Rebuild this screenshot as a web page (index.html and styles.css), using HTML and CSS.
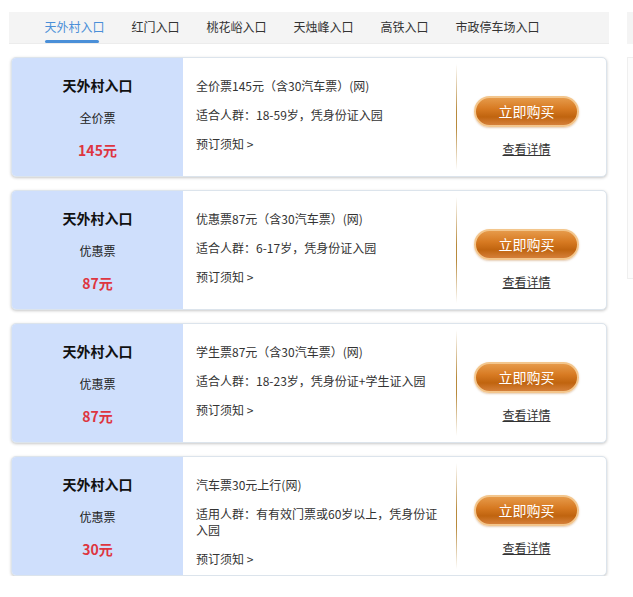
FILE: index.html
```html
<!DOCTYPE html>
<html lang="zh">
<head>
<meta charset="utf-8">
<title>门票</title>
<link rel="stylesheet" href="styles.css">
</head>
<body>
<div class="page">
  <div class="main">
    <div class="tabs">
      <div class="tab active">天外村入口</div>
      <div class="tab">红门入口</div>
      <div class="tab">桃花峪入口</div>
      <div class="tab">天烛峰入口</div>
      <div class="tab">高铁入口</div>
      <div class="tab">市政停车场入口</div>
    </div>

    <div class="card">
      <div class="side">
        <div class="gate">天外村入口</div>
        <div class="kind">全价票</div>
        <div class="price">145元</div>
      </div>
      <div class="info">
        <p>全价票145元（含30汽车票）(网)</p>
        <p>适合人群：18-59岁，凭身份证入园</p>
        <p>预订须知 &gt;</p>
      </div>
      <div class="divider"></div>
      <div class="act">
        <div class="buy">立即购买</div>
        <div class="detail">查看详情</div>
      </div>
    </div>

    <div class="card">
      <div class="side">
        <div class="gate">天外村入口</div>
        <div class="kind">优惠票</div>
        <div class="price">87元</div>
      </div>
      <div class="info">
        <p>优惠票87元（含30汽车票）(网)</p>
        <p>适合人群：6-17岁，凭身份证入园</p>
        <p>预订须知 &gt;</p>
      </div>
      <div class="divider"></div>
      <div class="act">
        <div class="buy">立即购买</div>
        <div class="detail">查看详情</div>
      </div>
    </div>

    <div class="card">
      <div class="side">
        <div class="gate">天外村入口</div>
        <div class="kind">优惠票</div>
        <div class="price">87元</div>
      </div>
      <div class="info">
        <p>学生票87元（含30汽车票）(网)</p>
        <p>适合人群：18-23岁，凭身份证+学生证入园</p>
        <p>预订须知 &gt;</p>
      </div>
      <div class="divider"></div>
      <div class="act">
        <div class="buy">立即购买</div>
        <div class="detail">查看详情</div>
      </div>
    </div>

    <div class="card">
      <div class="side">
        <div class="gate">天外村入口</div>
        <div class="kind">优惠票</div>
        <div class="price">30元</div>
      </div>
      <div class="info">
        <p>汽车票30元上行(网)</p>
        <p>适用人群：有有效门票或60岁以上，凭身份证入园</p>
        <p>预订须知 &gt;</p>
      </div>
      <div class="divider"></div>
      <div class="act">
        <div class="buy">立即购买</div>
        <div class="detail">查看详情</div>
      </div>
    </div>
  </div>

  <div class="aside">
    <div class="aside-head"></div>
    <div class="aside-box"></div>
  </div>
</div>
</body>
</html>
```

FILE: styles.css
```css
html, body {
  margin: 0;
  padding: 0;
  background: #fff;
  overflow: hidden;
}
body {
  font-family: "Noto Sans CJK SC", "Noto Sans", sans-serif;
  color: #333;
  font-size: 12px;
}
.page {
  display: flex;
  align-items: flex-start;
  padding: 12px 0 0 9px;
  gap: 18px;
  overflow: hidden;
}
.main {
  width: 600px;
  flex: none;
}
.tabs {
  display: flex;
  height: 32px;
  background: #f4f4f4;
  padding-left: 22px;
  box-sizing: border-box;
  border-bottom: 1px solid #ececec;
}
.tab {
  position: relative;
  padding: 0 13.5px;
  line-height: 30px;
  font-size: 12px;
  color: #333;
}
.tab.active {
  color: #4a8fd8;
}
.tab.active::after {
  content: "";
  position: absolute;
  left: 13.5px;
  bottom: 0;
  width: 54px;
  height: 3px;
  border-radius: 2px;
  background: #4a8fd8;
}
.card {
  display: flex;
  height: 120px;
  box-sizing: border-box;
  margin: 13px 2px 0 2px;
  border: 1px solid #dce4ec;
  border-radius: 5px;
  overflow: hidden;
  background: #fff;
  box-shadow: 0 1px 3px rgba(0, 0, 0, 0.22);
}
.side {
  width: 171px;
  flex: none;
  background: #cfdffc;
  text-align: center;
  padding-top: 17px;
  box-sizing: border-box;
}
.gate {
  font-size: 14px;
  font-weight: bold;
  color: #111;
  line-height: 20px;
}
.kind {
  font-size: 12px;
  line-height: 20px;
  margin-top: 13px;
  color: #222;
}
.price {
  font-size: 14px;
  font-weight: bold;
  color: #de3540;
  line-height: 20px;
  margin-top: 12px;
}
.info {
  width: 273px;
  flex: none;
  box-sizing: border-box;
  padding: 20px 12px 0 13px;
}
.info p {
  margin: 0 0 13px 0;
  line-height: 16px;
  font-size: 12px;
  color: #333;
}
.divider {
  width: 1px;
  flex: none;
  margin: 6px 0;
  background: linear-gradient(to bottom, rgba(190, 140, 60, 0), #b88a3c 45%, #b88a3c 60%, rgba(190, 140, 60, 0));
}
.act {
  flex: 1;
  display: flex;
  flex-direction: column;
  align-items: flex-start;
  padding: 38px 0 0 17px;
}
.buy {
  width: 105px;
  height: 31px;
  box-sizing: border-box;
  border-radius: 16px;
  border: 2px solid #f3c68d;
  background: linear-gradient(to bottom, #e69a4a 0%, #d77a22 40%, #c0640f 70%, #d5803a 100%);
  color: #fff;
  font-size: 14px;
  line-height: 27px;
  text-align: center;
  box-shadow: 0 1px 2px rgba(180, 110, 40, 0.35);
}
.detail {
  width: 105px;
  margin-top: 14px;
  text-align: center;
  font-size: 12px;
  line-height: 16px;
  color: #333;
  text-decoration: underline;
}
.aside {
  flex: 1;
  min-width: 0;
}
.aside-head {
  height: 32px;
  background: #f4f4f4;
}
.aside-box {
  margin-top: 13px;
  height: 220px;
  border: 1px solid #efefef;
  border-right: none;
  background: #fcfcfc;
}
```
